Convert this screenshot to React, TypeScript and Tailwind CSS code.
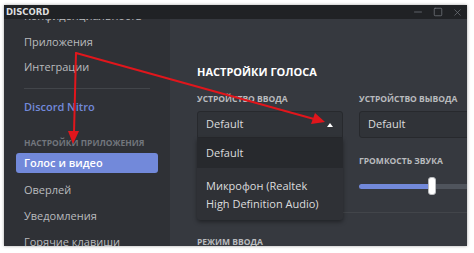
import { Minus, Square, X } from "lucide-react";

const font = { fontFamily: '"Open Sans", "Noto Sans", sans-serif' };

function NavItem({ label, active }: { label: string; active?: boolean }) {
  if (active) {
    return (
      <div className="mx-3 flex h-[20px] items-center rounded-[3px] bg-[#7289da] px-2 text-[11px] font-semibold text-white">
        {label}
      </div>
    );
  }
  return <div className="flex h-[26px] items-center px-5 text-[11px] text-[#b9bbbe]">{label}</div>;
}

function Arrows() {
  return (
    <svg className="pointer-events-none absolute left-0 top-0" width="474" height="253" viewBox="0 0 474 253">
      <g stroke="#e0161c" strokeWidth="2" fill="none" strokeLinecap="round">
        <line x1="76" y1="53" x2="74" y2="133" />
        <line x1="76" y1="53" x2="314" y2="119" />
      </g>
      <polygon points="73,144 68,131 79,131" fill="#e0161c" />
      <polygon points="325,122 311,124 315,113" fill="#e0161c" />
    </svg>
  );
}

export default function App() {
  return (
    <div className="relative h-[253px] w-[474px] overflow-hidden bg-white pb-[7px] pl-[4px] pr-[7px] pt-[5px]" style={font}>
      <div className="flex h-full flex-col overflow-hidden shadow-[0_0_3px_rgba(0,0,0,0.35)]">
        {/* title bar */}
        <div className="flex h-[14px] shrink-0 items-center justify-between bg-[#202225] pl-[2px] pr-[4px]">
          <span className="text-[8.5px] font-extrabold leading-none text-[#dcddde]" style={{ fontFamily: '"DejaVu Sans", sans-serif' }}>
            DISCORD
          </span>
          <div className="flex items-center gap-[9px] text-[#72767d]">
            <Minus size={12} strokeWidth={1.5} />
            <Square size={10} strokeWidth={1.8} />
            <X size={11} strokeWidth={1.5} />
          </div>
        </div>

        <div className="relative flex min-h-0 flex-1">
          {/* sidebar */}
          <aside className="w-[166px] shrink-0 overflow-hidden bg-[#2f3136]">
            <div className="mt-[-16px]">
              <div className="flex h-[27px] items-center px-5 text-[11px] text-[#b9bbbe]">Конфиденциальность</div>
              <div className="flex h-[25px] items-center px-5 text-[11px] text-[#b9bbbe]">Приложения</div>
              <div className="flex h-[25px] items-center px-5 text-[11px] text-[#b9bbbe]">Интеграции</div>
              <div className="mx-5 mt-[8px] h-px w-[126px] bg-[#42454a]" />
              <div className="mt-[7px] flex h-[22px] items-center px-5 text-[11px] font-semibold text-[#7289da]">Discord Nitro</div>
              <div className="mt-[20px] px-5 text-[8.5px] font-bold uppercase leading-[10px] text-[#72767d]">Настройки приложения</div>
              <div className="mt-[5px]">
                <NavItem label="Голос и видео" active />
              </div>
              <div className="mt-[4px]">
                <NavItem label="Оверлей" />
                <NavItem label="Уведомления" />
                <NavItem label="Горячие клавиши" />
              </div>
            </div>
          </aside>

          {/* main */}
          <main className="relative min-w-0 flex-1 overflow-hidden bg-[#36393f] pl-[27px]">
            <h2 className="mt-[46px] text-[11px] font-bold leading-[14px] text-white">НАСТРОЙКИ ГОЛОСА</h2>
            <div className="mt-[14px] flex gap-[16px]">
              <div className="relative w-[146px] shrink-0">
                <div className="text-[8.5px] font-bold leading-[12px] text-[#b9bbbe]">УСТРОЙСТВО ВВОДА</div>
                <div className="mt-[6px] flex h-[27px] items-center justify-between rounded-t-[3px] border border-[#27292d] bg-[#303338] pl-[8px] pr-[9px] text-[11px] text-[#dcddde]">
                  Default
                  <span className="h-0 w-0 border-x-[3.5px] border-b-[4px] border-x-transparent border-b-white" />
                </div>
                {/* open menu */}
                <div className="absolute left-0 top-[45px] z-10 w-[146px] rounded-b-[3px] bg-[#2f3136] shadow-[0_2px_4px_rgba(0,0,0,0.4)]">
                  <div className="flex h-[30px] items-center bg-[#27292d] pl-[9px] text-[11px] text-[#dcddde]">Default</div>
                  <div className="px-[9px] pb-[7px] pt-[9px] text-[11px] leading-[18px] text-[#dcddde]">
                    Микрофон (Realtek
                    <br />
                    High Definition Audio)
                  </div>
                </div>
              </div>
              <div className="w-[146px] shrink-0">
                <div className="text-[8.5px] font-bold leading-[12px] text-[#b9bbbe]">УСТРОЙСТВО ВЫВОДА</div>
                <div className="mt-[6px] flex h-[27px] items-center rounded-[3px] border border-[#27292d] bg-[#303338] pl-[8px] text-[11px] text-[#dcddde]">
                  Default
                </div>
                <div className="mt-[17px] text-[8.5px] font-bold leading-[12px] text-[#b9bbbe]">ГРОМКОСТЬ ЗВУКА</div>
                <div className="relative mt-[16px] flex h-[6px] items-center">
                  <div className="h-[5px] w-[72px] rounded-l-full bg-[#7289da]" />
                  <div className="h-[5px] flex-1 bg-[#4f545c]" />
                  <div className="absolute left-[69px] top-[-6px] h-[18px] w-[8px] rounded-[3px] border border-[#b9bbbe] bg-white" />
                </div>
              </div>
            </div>
            <div className="mt-[23px] h-px w-full bg-[#42454a]" />
            <div className="mt-[23px] text-[8.5px] font-bold leading-[12px] text-[#b9bbbe]">РЕЖИМ ВВОДА</div>
          </main>
        </div>
      </div>
      <Arrows />
    </div>
  );
}
